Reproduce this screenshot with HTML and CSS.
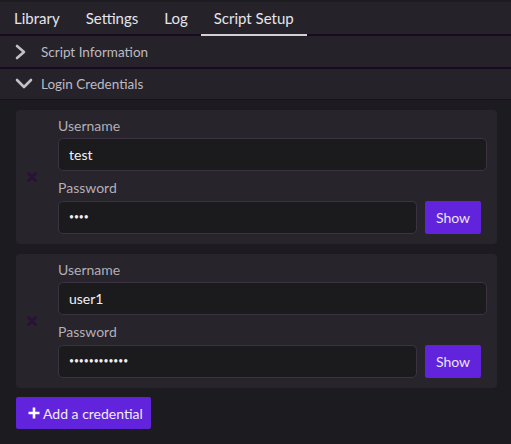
FILE: index.html
```html
<!DOCTYPE html>
<html>
<head>
<meta charset="utf-8">
<link rel="stylesheet" href="styles.css">
</head>
<body>
<div class="app">
  <div class="topstrip"></div>
  <nav class="tabs">
    <div class="tab">Library</div>
    <div class="tab">Settings</div>
    <div class="tab">Log</div>
    <div class="tab active">Script Setup</div>
  </nav>
  <div class="section">
    <span class="chevbox"><svg width="12" height="16" viewBox="0 0 12 16"><path d="M2 2 L9 8 L2 14" fill="none" stroke="#c4c0c8" stroke-width="2.6" stroke-linecap="round" stroke-linejoin="round"/></svg></span>
    <span>Script Information</span>
  </div>
  <div class="section open">
    <span class="chevbox"><svg width="18" height="12" viewBox="0 0 18 12"><path d="M2 2 L9 9 L16 2" fill="none" stroke="#c4c0c8" stroke-width="2.6" stroke-linecap="round" stroke-linejoin="round"/></svg></span>
    <span>Login Credentials</span>
  </div>
  <main class="content">
    <div class="card">
      <div class="remove"><svg width="10" height="10" viewBox="0 0 10 10"><path d="M1.5 1.5 L8.5 8.5 M8.5 1.5 L1.5 8.5" stroke="#2a0f36" stroke-width="2.6" stroke-linecap="round"/></svg></div>
      <div class="fields">
        <label class="lbl">Username</label>
        <div class="input">test</div>
        <label class="lbl lbl2">Password</label>
        <div class="pwrow">
          <div class="input pw">••••</div>
          <button class="btn show">Show</button>
        </div>
      </div>
    </div>
    <div class="card">
      <div class="remove"><svg width="10" height="10" viewBox="0 0 10 10"><path d="M1.5 1.5 L8.5 8.5 M8.5 1.5 L1.5 8.5" stroke="#2a0f36" stroke-width="2.6" stroke-linecap="round"/></svg></div>
      <div class="fields">
        <label class="lbl">Username</label>
        <div class="input">user1</div>
        <label class="lbl lbl2">Password</label>
        <div class="pwrow">
          <div class="input pw">••••••••••••</div>
          <button class="btn show">Show</button>
        </div>
      </div>
    </div>
    <button class="btn add"><svg width="12" height="12" viewBox="0 0 12 12"><path d="M6 0.5 V11.5 M0.5 6 H11.5" stroke="#ffffff" stroke-width="2.6"/></svg><span>Add a credential</span></button>
  </main>
</div>
</body>
</html>
```
FILE: styles.css
```css
* { box-sizing: border-box; }
html, body { margin: 0; padding: 0; }
body {
  width: 511px;
  height: 444px;
  background: #1c1b1f;
  font-family: "Lato", "Noto Sans", sans-serif;
  overflow: hidden;
}
.app { display: flex; flex-direction: column; height: 444px; }
.topstrip { height: 2px; background: #1d1c20; }
.tabs {
  display: flex;
  height: 34px;
  background: #252329;
  border-bottom: 2px solid #1a0a21;
  padding-left: 1px;
}
.tab {
  padding: 0 13px;
  color: #e6e3ea;
  font-size: 15px;
  line-height: 32px;
  height: 33px;
}
.tab.active { border-bottom: 2px solid #d2d0d5; height: 34px; }
.section {
  display: flex;
  align-items: center;
  height: 33px;
  background: #252329;
  border-bottom: 2px solid #1a0a21;
  color: #bdb9c2;
  font-size: 13.5px;
  padding-left: 15px;
}
.section.open { height: 31px; border-bottom: 1px solid #17131b; }
.chevbox { width: 26px; display: flex; align-items: center; }
.content {
  flex: 1;
  padding: 10px 14px 0 16px;
  display: flex;
  flex-direction: column;
  align-items: flex-start;
  gap: 10px;
}
.card {
  align-self: stretch;
  display: flex;
  background: #27242b;
  border-radius: 4px;
  padding: 6px 10px 10px 0;
}
.remove {
  width: 32px;
  margin-right: 10px;
  display: flex;
  align-items: center;
  justify-content: center;
  padding-top: 3px;
}
.fields { flex: 1; display: flex; flex-direction: column; }
.lbl {
  color: #b3afb7;
  font-size: 14px;
  line-height: 20px;
  margin-bottom: 2px;
}
.lbl2 { margin-top: 7px; margin-bottom: 3px; }
.input {
  height: 33px;
  background: #1b1a1d;
  border: 1px solid #3b3342;
  border-radius: 5px;
  color: #f2f0f4;
  font-size: 14px;
  line-height: 31px;
  padding-left: 10px;
}
.pwrow { display: flex; gap: 8px; padding-right: 6px; }
.pw { flex: 1; font-size: 8.5px; }
.btn {
  border: none;
  background: #6123dc;
  color: #ece4fb;
  font-family: inherit;
  border-radius: 2px;
  cursor: pointer;
  padding: 0;
}
.show { width: 56px; height: 33px; font-size: 14px; }
.add {
  margin-top: -1px;
  height: 32px;
  padding: 0 8px 0 12px;
  display: flex;
  align-items: center;
  gap: 3px;
  font-size: 14px;
  color: #f1ecfb;
}
```
